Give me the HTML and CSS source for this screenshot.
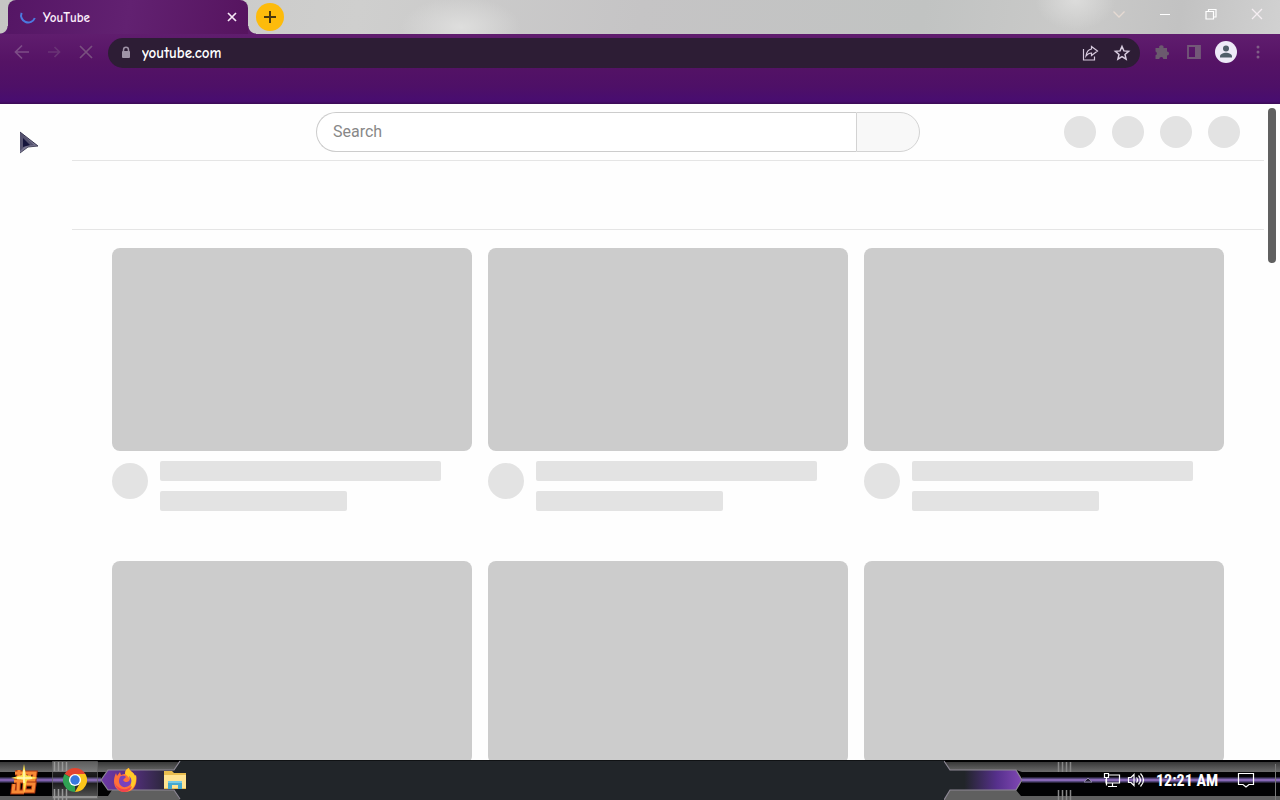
FILE: index.html
```html
<!DOCTYPE html>
<html lang="en">
<head>
<meta charset="utf-8">
<title>YouTube</title>
<link rel="stylesheet" href="styles.css">
</head>
<body>
<header class="titlebar">
  <div class="tab">
    <svg class="spinner" width="18" height="18" viewBox="0 0 18 18"><path d="M2.600 4.800A7 7 0 1 0 15.800 10" fill="none" stroke="#4c7ae0" stroke-width="2"/></svg>
    <span class="tab-title">YouTube</span>
    <button class="tab-close" aria-label="Close tab"><svg width="10" height="10" viewBox="0 0 10 10"><path d="M1 1l8 8M9 1l-8 8" stroke="#f6e8f6" stroke-width="1.700"/></svg></button>
  </div>
  <button class="new-tab" aria-label="New tab"><svg width="14" height="14" viewBox="0 0 14 14"><path d="M7 1v12M1 7h12" stroke="#49380f" stroke-width="2"/></svg></button>
  <div class="window-controls">
    <button aria-label="Search tabs"><svg width="14" height="14" viewBox="0 0 14 14"><path d="M1.500 4.500L7 10l5.500-5.500" fill="none" stroke="#e6dad2" stroke-width="1.300"/></svg></button>
    <button aria-label="Minimize"><svg width="14" height="14" viewBox="0 0 14 14"><path d="M2 7.500h10" stroke="#fff"/></svg></button>
    <button aria-label="Restore"><svg width="14" height="14" viewBox="0 0 14 14"><path d="M4.500 4V2.500h7.500v7.500H10M2 4.500h7.500V12H2z" fill="none" stroke="#fff" stroke-width="1.200"/></svg></button>
    <button aria-label="Close"><svg width="14" height="14" viewBox="0 0 14 14"><path d="M2 2l10 10M12 2L2 12" stroke="#f5eef2" stroke-width="1.300"/></svg></button>
  </div>
</header>
<nav class="toolbar">
  <button aria-label="Back"><svg width="18" height="18" viewBox="0 0 18 18"><path d="M16 9H3M9 2.500L2.500 9 9 15.500" fill="none" stroke="#7d4d87" stroke-width="1.700"/></svg></button>
  <button aria-label="Forward"><svg width="18" height="18" viewBox="0 0 18 18"><path d="M3 9h11M9.500 4l5 5-5 5" fill="none" stroke="#693475" stroke-width="1.700"/></svg></button>
  <button aria-label="Stop"><svg width="18" height="18" viewBox="0 0 18 18"><path d="M3 3l12 12M15 3L3 15" stroke="#79507f" stroke-width="1.700"/></svg></button>
  <div class="omnibox">
    <svg class="lock" width="10" height="14" viewBox="0 0 10 14"><path d="M2.500 6V4a2.500 2.700 0 0 1 5 0v2" fill="none" stroke="#9f93a7" stroke-width="1.500"/><rect x="1" y="5" width="8" height="7" rx="1" fill="#9f93a7"/></svg>
    <input type="text" value="youtube.com" aria-label="Address">
    <button aria-label="Share"><svg width="18" height="18" viewBox="0 0 18 18"><path d="M2.500 5v11h11v-3.500M10.500 2.500l6 4.500-6 4.500V9C8 9 6.500 10 5 12c.5-4 2.500-6.500 5.500-7z" fill="none" stroke="#d7c9de" stroke-width="1.200"/></svg></button>
    <button aria-label="Bookmark"><svg width="18" height="18" viewBox="0 0 18 18"><path d="M9 2.500l1.900 4.400 4.700.4-3.600 3.100 1.100 4.700L9 12.600l-4.100 2.500L6 10.400 2.400 7.300l4.700-.4z" fill="none" stroke="#d9cde0" stroke-width="1.500"/></svg></button>
  </div>
  <button aria-label="Extensions"><svg width="18" height="18" viewBox="0 0 18 18"><path d="M2.500 5H6.200a2.200 2.200 0 1 1 4.300 0h3.500v3.400a2 2 0 1 1 0 4.100V16h-3.700a2 2 0 0 0-4 0H2.500v-3.700a2 2 0 0 0 0-3.800z" fill="#6b5a6e"/></svg></button>
  <button aria-label="Side panel"><svg width="18" height="18" viewBox="0 0 18 18"><path d="M3 3h12v12H3z" fill="none" stroke="#735878" stroke-width="1.800"/><path d="M10 3h5v12h-5z" fill="#735878"/></svg></button>
  <button class="profile" aria-label="Profile"><svg width="22" height="22" viewBox="0 0 22 22"><circle cx="11" cy="11" r="11" fill="#eee9f8"/><circle cx="11" cy="7.500" r="3" fill="#515d6b"/><path d="M5 16.500v-1.200c0-2.400 3.500-3.600 6-3.600s6 1.200 6 3.600v1.200z" fill="#515d6b"/></svg></button>
  <button aria-label="Menu"><svg width="18" height="18" viewBox="0 0 18 18"><g fill="#805e87"><circle cx="9" cy="4" r="1.500"/><circle cx="9" cy="9" r="1.500"/><circle cx="9" cy="14" r="1.500"/></g></svg></button>
</nav>
<main class="page">
  <div class="masthead">
    <form class="search">
      <input type="text" placeholder="Search" aria-label="Search">
      <button type="button" aria-label="Submit search"></button>
    </form>
    <div class="placeholders"><i></i><i></i><i></i><i></i></div>
  </div>
  <div class="chips"></div>
  <div class="grid">
    <article><div class="thumb"></div><div class="details"><i></i><div class="lines"><b></b><b></b></div></div></article>
    <article><div class="thumb"></div><div class="details"><i></i><div class="lines"><b></b><b></b></div></div></article>
    <article><div class="thumb"></div><div class="details"><i></i><div class="lines"><b></b><b></b></div></div></article>
    <article><div class="thumb"></div></article>
    <article><div class="thumb"></div></article>
    <article><div class="thumb"></div></article>
  </div>
  <div class="scroll-thumb"></div>
  <svg class="cursor" width="18" height="26" viewBox="0 0 18 26"><path d="M0 4l18 14-10 1-8 6z" fill="#77748f"/><path d="M0 4l14 13-9 1-5 5z" fill="#55526f"/><path d="M3 10l7 7-7 2z" fill="#15143c"/><path d="M0 4l18 14" stroke="#35334f"/><path d="M0 25l8-6 10-1" fill="none" stroke="#4c4a60"/></svg>
</main>
<footer class="taskbar">
  <svg class="art art-left" width="184" height="40" viewBox="0 0 184 40">
    <defs>
      <linearGradient id="edge" x1="0" y1="0" x2="0" y2="1"><stop offset="0" stop-color="#383838"/><stop offset="1" stop-color="#6c6c6c"/></linearGradient>
      <linearGradient id="glow" x1="0" x2="1"><stop offset="0" stop-color="#6e3aa5"/><stop offset=".3" stop-color="#5e318f"/><stop offset="1" stop-color="#212529"/></linearGradient>
      <linearGradient id="shine" x1="0" y1="0" x2="0" y2="1"><stop offset="0" stop-color="#fff" stop-opacity=".2"/><stop offset=".5" stop-color="#fff" stop-opacity=".06"/><stop offset="1" stop-color="#fff" stop-opacity=".35"/></linearGradient>
    </defs>
    <path d="M0 0h180l-6 10v20l6 10H0z" fill="#020203"/>
    <path d="M0 2h179l-5 8H108l-2 2H0z" fill="url(#edge)"/>
    <path d="M0 36h108l4-6h62l6 10H0z" fill="#5f5f5f"/>
    <path d="M0 20h101" stroke="#54467a" stroke-width="5"/><path d="M0 20h101" stroke="#8060ad" stroke-width="2"/>
    <path d="M101 20l7-10h66v20h-66z" fill="url(#glow)"/>
    <path d="M180 1l-6 9h-66l-7 10 7 10h66l6 9" fill="none" stroke="#8d8794" stroke-width="1.200"/>
    <path d="M52.500 1.500h45v37h-45z" fill="url(#shine)" stroke="#666" stroke-width=".7"/>
    <path d="M54.500 2v9M58.500 2v9M62.500 2v9M66.500 2v9M54.500 29v11M58.500 29v11M62.500 29v11M66.500 29v11" stroke="#999" stroke-width="1.500"/>
  </svg>
  <div class="apps">
    <button aria-label="Start"><svg width="30" height="32" viewBox="0 0 30 32"><g fill="none" stroke="#a8330f" stroke-width="5"><path d="M5 9h11M4 17h11M9 6l-1 21M4 20L3 28h11M16 9h9l-1 7h-8M15 20h9l-1 7h-9z"/></g><g fill="none" stroke="#f98a35" stroke-width="3"><path d="M5 9h11M4 17h11M9 6l-1 21M4 20L3 28h11M16 9h9l-1 7h-8M15 20h9l-1 7h-9zM20 8l-1 9"/></g><path d="M14 0l2 11 12 3-11 2-3 13-1-13L1 14l11-3z" fill="#ffe34f"/><path d="M14 6v13M7 14h15" stroke="#fff8bf" stroke-width="1.500"/></svg></button>
    <button aria-label="Chrome"><svg width="24" height="24" viewBox="0 0 24 24"><path d="M12 12L1.600 6A12 12 0 0 1 22.400 6z" fill="#e4442f"/><path d="M12 12L1.600 6A12 12 0 0 0 12 24z" fill="#30a354"/><path d="M12 6h10.400A12 12 0 0 1 12 24l5-9z" fill="#fbc51b"/><circle cx="12" cy="12" r="6" fill="#fff"/><circle cx="12" cy="12" r="4.700" fill="#3978de"/></svg></button>
    <button aria-label="Firefox"><svg width="24" height="24" viewBox="0 0 24 24"><path d="M3 5l1 3 3-4 1 3c2-1 3-1 4-1 0-3 1-5 4-6 0 3 5 4 6 8l1-1c2 9-2 17-11 17C3 24-2 16 3 5z" fill="#ff7139"/><path d="M16 0c0 3 5 4 6 8l1-1c1 8-2 14-8 16 5-5 4-12-3-17 0-3 1-5 4-6z" fill="#ffc928"/><path d="M2 15c3 7 12 8 17 3-1 4-5 6-9 6-4-1-7-4-8-9z" fill="#f1434e"/><path d="M7 9c2-2 5-1 6 0l-3 3c1 2 4 3 6 1 1-1 1-3 0-5 4 3 3 10-3 11-5 1-9-4-6-10z" fill="#7942bd"/></svg></button>
    <button aria-label="File Explorer"><svg width="22" height="20" viewBox="0 0 22 20"><path d="M0 2V1h8l2 2h12v16H0z" fill="#e9bd4e"/><path d="M0 5h22v13H0z" fill="#ffe391"/><path d="M4 19v-8h14v8h-4v-4H8v4z" fill="#46a9cf"/><path d="M4 11h14v2H4z" fill="#75c9e5"/></svg></button>
  </div>
  <svg class="art art-right" width="336" height="40" viewBox="0 0 336 40">
    <defs><linearGradient id="glow2" x1="0" x2="1"><stop offset=".2" stop-color="#212529"/><stop offset=".65" stop-color="#56308c"/><stop offset="1" stop-color="#8148b5"/></linearGradient></defs>
    <path d="M0 0h336v40H0l6-10V10z" fill="#020203"/>
    <path d="M1 2h335v10H78l-6-2H6z" fill="url(#edge)"/>
    <path d="M0 40l6-10h66l5 6h259v4z" fill="#5f5f5f"/>
    <path d="M6 10h66l6 10-6 10H6z" fill="url(#glow2)"/>
    <path d="M0 1l6 9h66l6 10-6 10H6l-6 10" fill="none" stroke="#8d8794" stroke-width="1.200"/>
    <path d="M78 20h258" stroke="#54467a" stroke-width="5"/><path d="M78 20h258" stroke="#8868b5" stroke-width="2"/>
    <path d="M114.500 2v18M118.500 2v18M122.500 2v18M126.500 2v18M114.500 30v10M118.500 30v10M122.500 30v10M126.500 30v10" stroke="#888" stroke-width="1.500" stroke-dasharray="10 20"/>
    <path d="M331.500 4v36" stroke="#777"/>
  </svg>
  <div class="tray">
    <button aria-label="Hidden icons"><svg width="10" height="6" viewBox="0 0 10 6"><path d="M1 5l4-4 4 4z" fill="#251d36" stroke="#8c86a4"/></svg></button>
    <button aria-label="Network"><svg width="18" height="16" viewBox="0 0 18 16"><path d="M5 3h11.500v8H3V7M1.500 1.500h4v4h-4zM3.500 5.500v8M9.500 11v3M5 14.500h9" fill="none" stroke="#fff" stroke-width="1.200"/></svg></button>
    <button aria-label="Volume"><svg width="18" height="16" viewBox="0 0 18 16"><path d="M1.500 5.500H4l3-3v11l-3-3H1.500zM9.500 5.500q2 2.500 0 5M11.500 3.500q4 4.500 0 9M13.500 1.500q6 6.500 0 13" fill="none" stroke="#fff" stroke-width="1.200"/></svg></button>
    <time class="clock">12:21 AM</time>
    <button class="notify" aria-label="Notifications"><svg width="18" height="18" viewBox="0 0 18 18"><path d="M1.500 2.500h15v11H12L9 16l-3-2.500H1.500z" fill="none" stroke="#fff" stroke-width="1.200"/></svg></button>
  </div>
</footer>
</body>
</html>
```
FILE: styles.css
```css
* { box-sizing: border-box; }
body {
  margin: 0;
  height: 100vh;
  display: flex;
  flex-direction: column;
  overflow: hidden;
  background: #fff;
  font-family: Roboto, "Liberation Sans", sans-serif;
}
button {
  display: flex;
  align-items: center;
  justify-content: center;
  padding: 0;
  border: 0;
  background: none;
}
input { min-width: 0; outline: 0; }

.titlebar {
  display: flex;
  flex: none;
  height: 34px;
  padding-left: 8px;
  background:
    radial-gradient(ellipse 60px 30px at 36% 80%, #dededd, transparent),
    radial-gradient(ellipse 40px 30px at 84% 0, #dcdcdb, transparent),
    linear-gradient(100deg, #c6c6c4, #cfcfce 28%, #c5c4c5 50%, #c1c3c2 72%, #cacac9 84%, #c2c2c2 92%, #d1d1d1);
}
.tab {
  position: relative;
  display: flex;
  align-items: center;
  width: 240px;
  padding: 0 10px 0 11px;
  border-radius: 8px 8px 0 0;
  background: linear-gradient(100deg, #551665, #622171 50%, #56145f);
}
.tab::before, .tab::after {
  content: "";
  position: absolute;
  bottom: 0;
  width: 8px;
  height: 8px;
}
.tab::before { right: 100%; background: radial-gradient(circle at 0 0, transparent 7px, #57176a 8px); }
.tab::after { left: 100%; background: radial-gradient(circle at 100% 0, transparent 7px, #5c1a68 8px); }
.tab-title {
  flex: 1;
  margin-left: 6px;
  color: #fbeefb;
  font: bold 13px "Comic Sans MS", "Comic Neue", Lato, sans-serif;
}
.tab-close { width: 12px; height: 20px; }
.new-tab {
  width: 28px;
  height: 28px;
  margin: 3px 8px;
  border-radius: 50%;
  background: #fdbb0b;
}
.window-controls { display: flex; margin-left: auto; height: 28px; }
.window-controls button { width: 46px; }

.toolbar {
  display: flex;
  flex: none;
  align-items: flex-start;
  height: 70px;
  padding: 4px 6px 0;
  background: linear-gradient(#601d6e, #551365 40%, #4e1067 75%, #480d70 96%, #3b0b54);
}
.toolbar > button { width: 32px; height: 28px; }
.omnibox {
  display: flex;
  flex: 1;
  align-items: center;
  height: 30px;
  margin: 0 6px;
  padding: 0 2px 0 13px;
  border-radius: 15px;
  background: #2d1d35;
}
.omnibox input {
  flex: 1;
  margin-left: 11px;
  padding: 0;
  border: 0;
  background: none;
  color: #fff;
  font: bold 15px "Comic Sans MS", "Comic Neue", Lato, sans-serif;
}
.omnibox button { width: 32px; height: 28px; }

.page { position: relative; flex: 1; min-height: 0; overflow: hidden; background: #fefefe; }
.masthead {
  display: flex;
  align-items: center;
  height: 56px;
  padding: 0 40px 0 316px;
}
.search { display: flex; flex: 0 1 604px; height: 40px; }
.search input {
  flex: 1;
  padding: 0 16px 2px;
  border: 1px solid #ccc;
  border-right: 0;
  border-radius: 20px 0 0 20px;
  background: #fff;
  font: 16px Roboto, sans-serif;
}
.search input::placeholder { color: #888; opacity: 1; }
.search button {
  width: 64px;
  border: 1px solid #d3d3d3;
  border-radius: 0 20px 20px 0;
  background: #f8f8f8;
}
.placeholders { display: flex; gap: 16px; margin-left: auto; }
.placeholders i { width: 32px; height: 32px; border-radius: 50%; background: #e3e3e3; }
.chips {
  height: 70px;
  margin: 0 16px 0 72px;
  border: solid #e5e5e5;
  border-width: 1px 0;
}
.grid {
  display: grid;
  grid-template-columns: repeat(3, 1fr);
  gap: 50px 16px;
  padding: 18px 56px 0 112px;
}
.thumb { height: 203px; border-radius: 8px; background: #ccc; }
.details { display: flex; gap: 12px; padding-top: 10px; }
.details i { width: 36px; height: 36px; margin-top: 2px; border-radius: 50%; background: #e3e3e3; }
.lines { display: grid; flex: 1; gap: 10px; }
.lines b { width: 90%; height: 20px; border-radius: 2px; background: #e3e3e3; }
.lines b + b { width: 60%; }
.scroll-thumb {
  position: absolute;
  top: 4px;
  right: 4px;
  width: 8px;
  height: 155px;
  border-radius: 4px;
  background: #606060;
}
.cursor { position: absolute; top: 24px; left: 20px; }

.taskbar {
  position: relative;
  display: flex;
  flex: none;
  justify-content: space-between;
  height: 40px;
  background: linear-gradient(#101214 1px, #212529 1px);
}
.art { position: absolute; top: 0; }
.art-left { left: 0; }
.art-right { right: 0; }
.apps, .tray { position: relative; display: flex; align-items: center; }
.apps button { width: 50px; height: 40px; }
.tray { padding-right: 22px; }
.tray button { width: 24px; height: 40px; }
.clock {
  width: 62px;
  margin: 0 16px 0 8px;
  color: #fff;
  text-align: center;
  white-space: nowrap;
  font: bold 16px "Liberation Sans Narrow", "Roboto Condensed", "DejaVu Sans Condensed", sans-serif;
}
```
